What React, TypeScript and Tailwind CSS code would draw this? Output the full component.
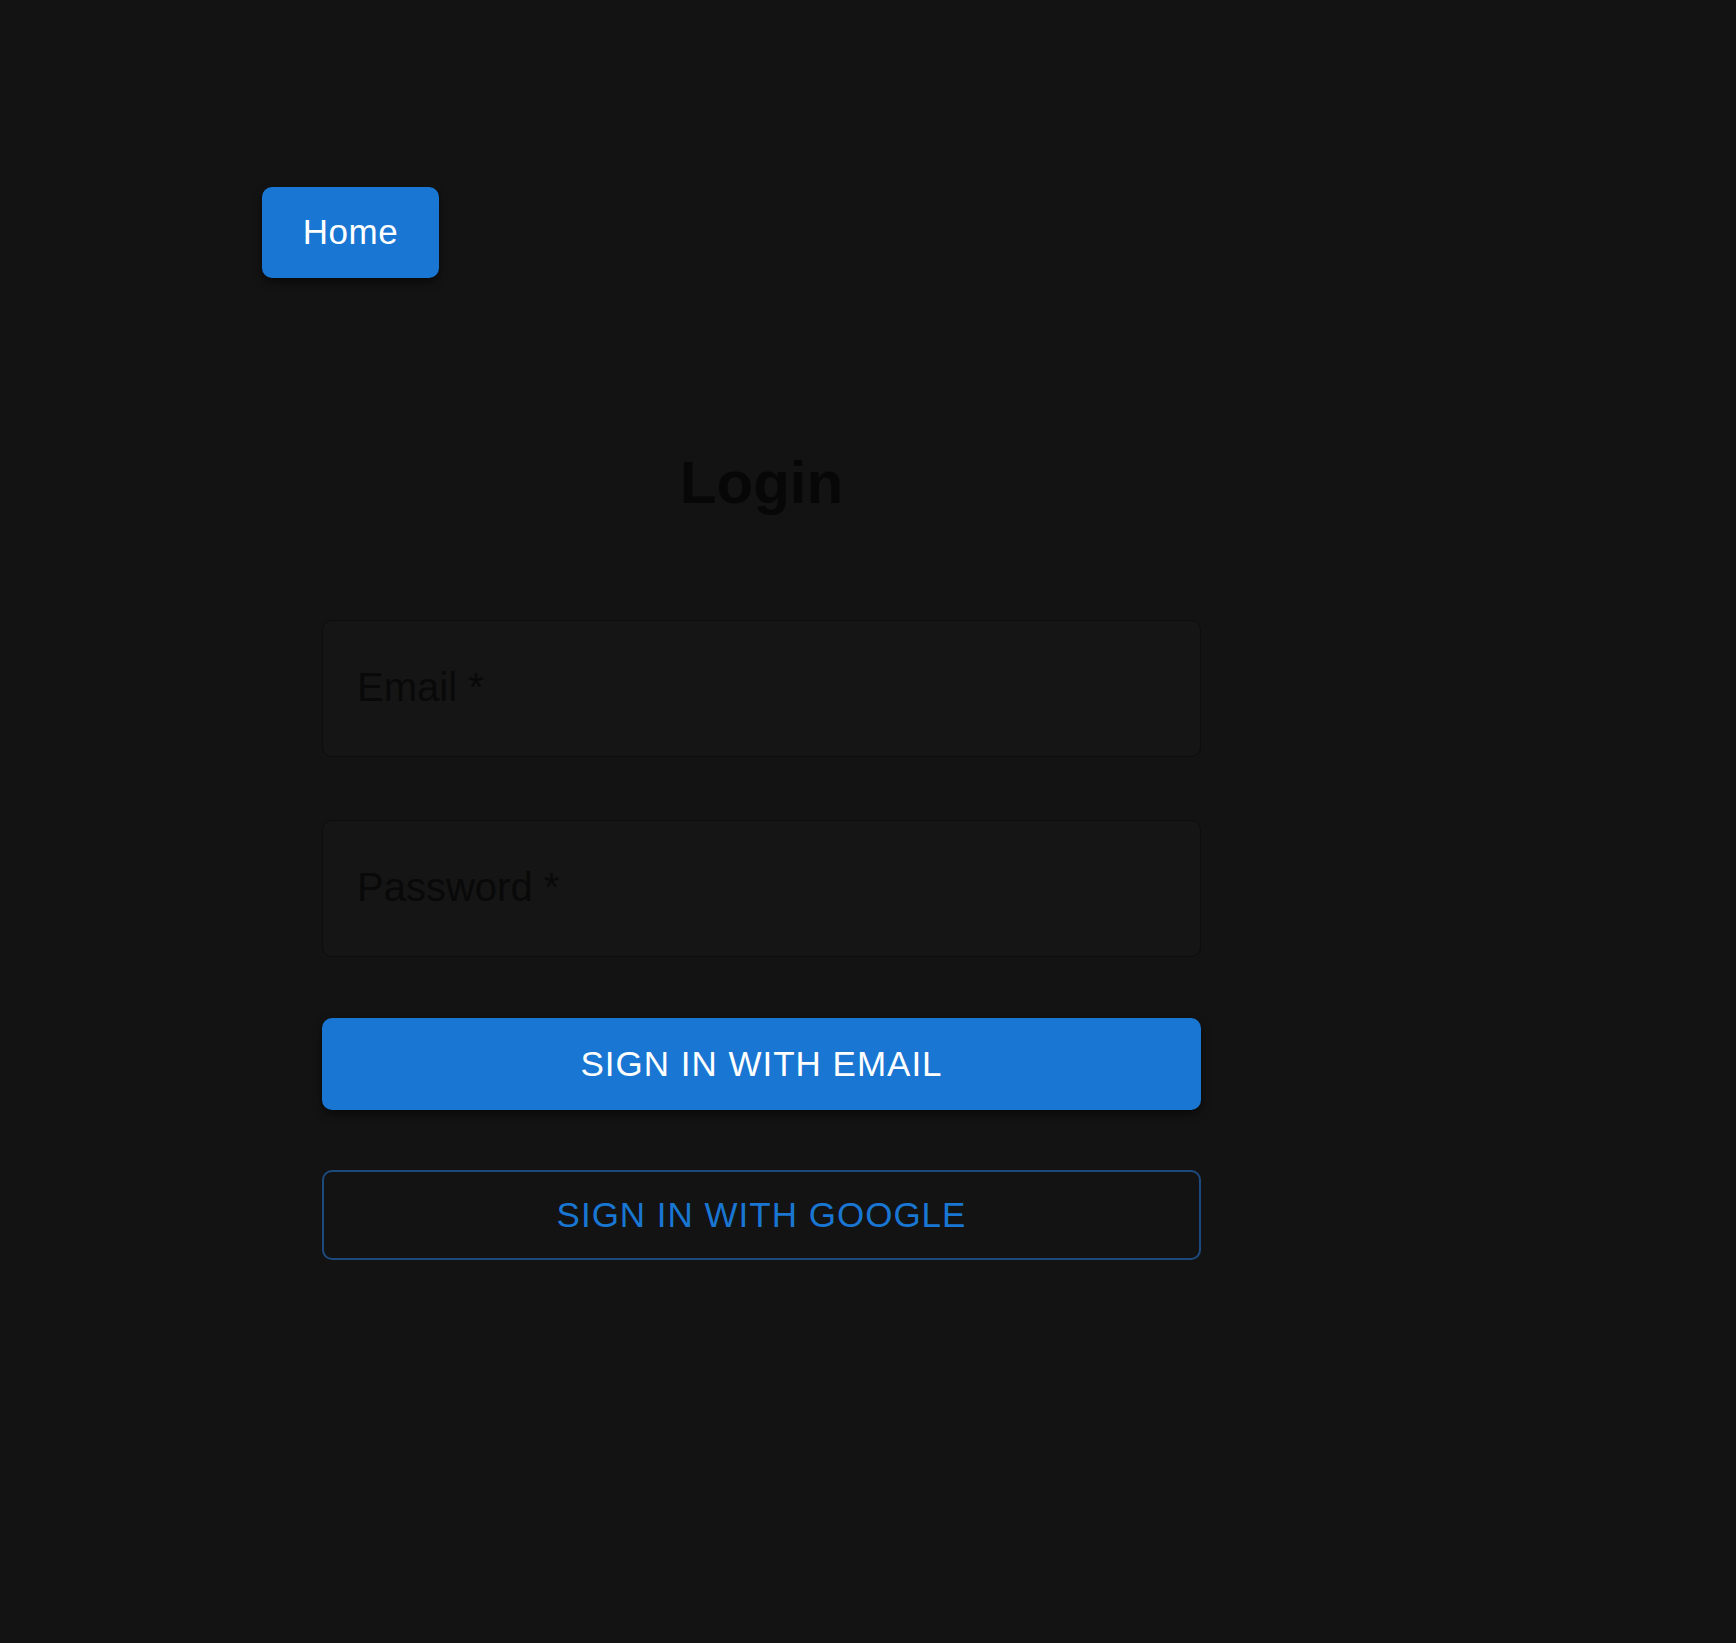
export default function App() {
  const font = { fontFamily: '"Liberation Sans", Arial, sans-serif' };
  return (
    <div className="min-h-[1643px] w-full bg-[#131313]" style={font}>
      <div className="pl-[262px] pt-[187px]">
        <button className="flex h-[91px] w-[177px] items-center justify-center rounded-[10px] bg-[#1976d2] text-[35px] tracking-[0.5px] text-white shadow-[0_4px_8px_rgba(0,0,0,0.5)]">
          Home
        </button>

        <div className="ml-[60px] mt-[170px] flex w-[879px] flex-col">
          <h1 className="text-center text-[60px] font-bold leading-[70px] text-[#070707]">Login</h1>

          <div className="mt-[102px] flex h-[137px] items-center rounded-[10px] border-[1.5px] border-[#0d0d0d] bg-[#151515] pb-[4px] pl-[34px]">
            <span className="text-[40px] leading-none text-[#090909]">Email *</span>
          </div>

          <div className="mt-[63px] flex h-[137px] items-center rounded-[10px] border-[1.5px] border-[#0d0d0d] bg-[#151515] pb-[4px] pl-[34px]">
            <span className="text-[40px] leading-none text-[#090909]">Password *</span>
          </div>

          <button className="mt-[61px] flex h-[92px] items-center justify-center rounded-[10px] bg-[#1976d2] text-[35px] tracking-[1px] text-white shadow-[0_4px_8px_rgba(0,0,0,0.5)]">
            SIGN IN WITH EMAIL
          </button>

          <button className="mt-[60px] flex h-[90px] items-center justify-center rounded-[10px] border-2 border-[#1d4a7e] text-[35px] tracking-[1px] text-[#1976d2]">
            SIGN IN WITH GOOGLE
          </button>
        </div>
      </div>
    </div>
  );
}
